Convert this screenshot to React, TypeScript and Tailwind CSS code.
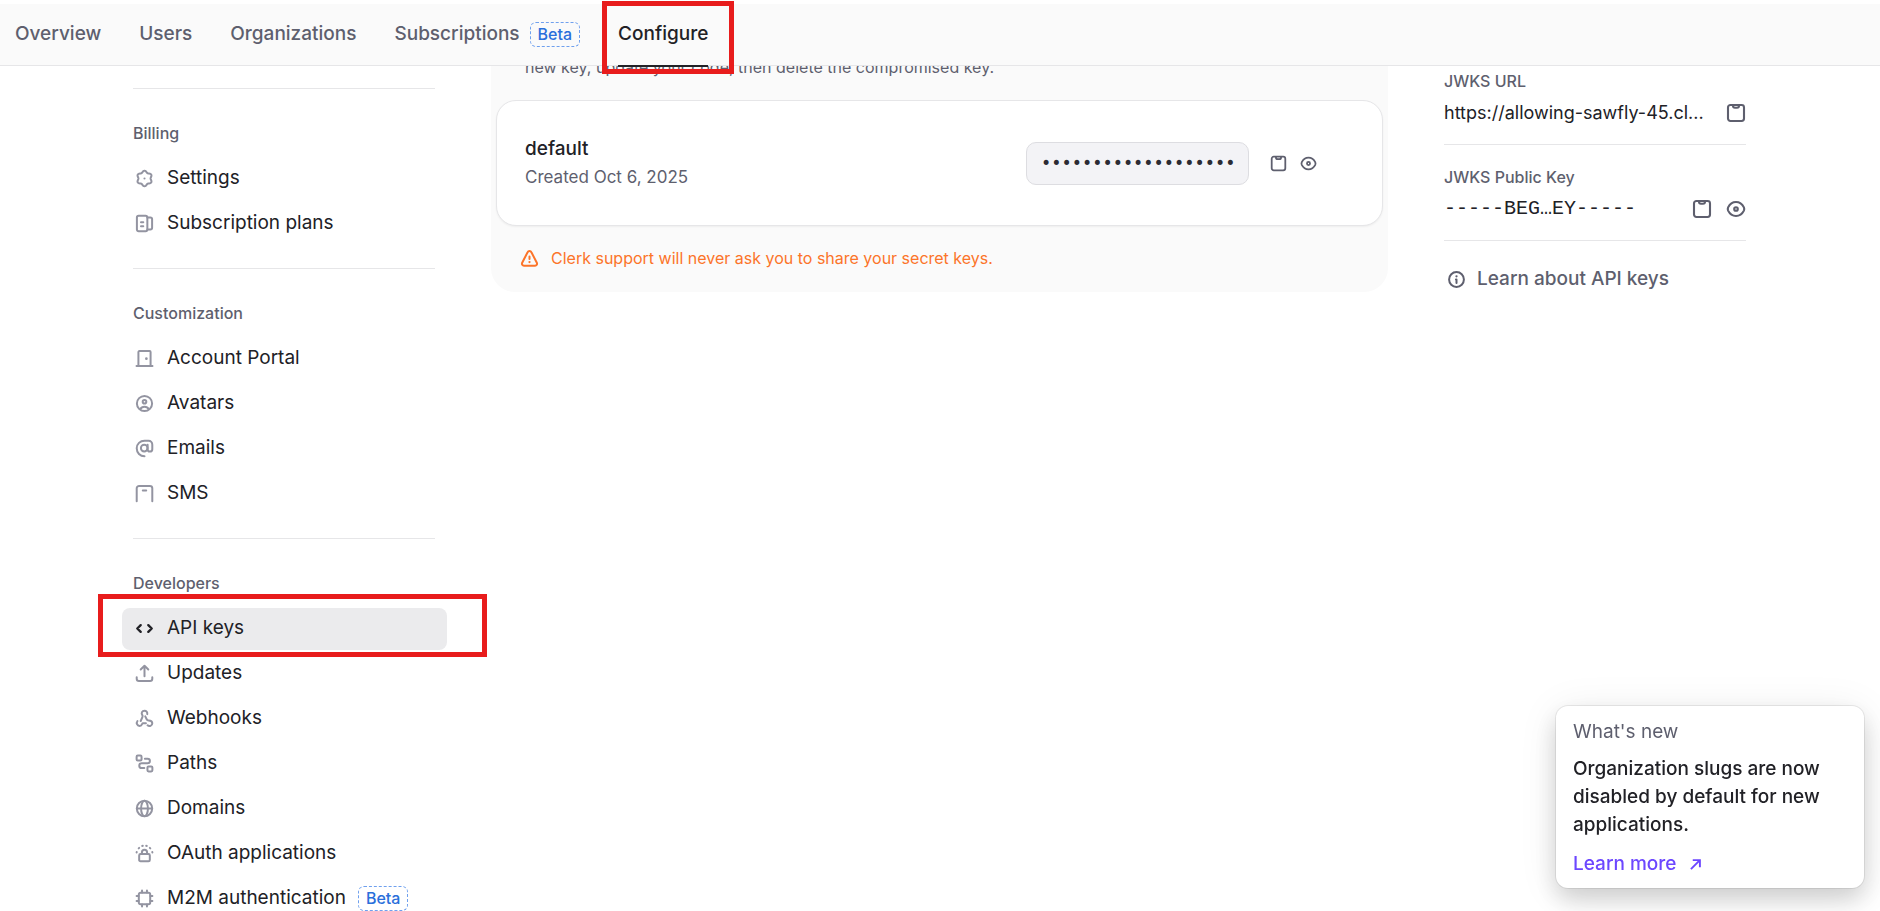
import type { ReactNode } from "react";

type IconProps = { className?: string; children: ReactNode };

function Icon({ className = "size-[19px]", children }: IconProps) {
  return (
    <svg
      viewBox="0 0 20 20"
      className={className}
      fill="none"
      stroke="currentColor"
      strokeWidth="2.1"
      strokeLinecap="round"
      strokeLinejoin="round"
      aria-hidden="true"
    >
      {children}
    </svg>
  );
}

// Six-lobed outline of the settings cog, with one lobe pointing straight up.
const cogPoints = Array.from({ length: 72 }, (_, i) => {
  const angle = (i / 72) * Math.PI * 2;
  const radius = 7.3 + 0.9 * Math.cos(6 * angle);
  return `${(10 + radius * Math.sin(angle)).toFixed(2)},${(10 - radius * Math.cos(angle)).toFixed(2)}`;
}).join(" ");

const icons = {
  settings: (
    <Icon>
      <polygon points={cogPoints} />
      <circle cx="10" cy="10" r="1.1" fill="currentColor" stroke="none" />
    </Icon>
  ),
  plans: (
    <Icon>
      <rect x="2" y="1.8" width="11" height="16.4" rx="1.8" />
      <path d="M13 3.6h3.200c1 0 1.800.8 1.800 1.800v9.200c0 1-.8 1.800-1.800 1.800H13M6.300 8.600h2.400M6.300 12.800h2.400" />
    </Icon>
  ),
  portal: (
    <Icon>
      <path d="M3.600 17.600V3.200c0-.6.4-1 1-1h10.800c.6 0 1 .4 1 1v14.400M1.600 18h16.800" />
      <circle cx="12" cy="10.200" r="1.400" fill="currentColor" stroke="none" />
    </Icon>
  ),
  avatars: (
    <Icon>
      <circle cx="10" cy="10" r="8" />
      <circle cx="10" cy="8.200" r="1.900" />
      <path d="M5.800 15.800c.8-1.800 2.400-2.400 4.200-2.400s3.400.6 4.200 2.400" />
    </Icon>
  ),
  emails: (
    <Icon>
      <circle cx="9.700" cy="9.600" r="3.500" />
      <path d="M13.300 6v5c0 1.300.9 2.200 2.300 2.200s2.600-.9 2.600-2.500V6c0-2.400-1.600-4.200-4-4.200H10C5.400 1.800 1.800 5.200 1.800 9.800c0 4.700 3.600 8.300 8.200 8.300" />
    </Icon>
  ),
  sms: (
    <Icon>
      <path d="M1.800 18.200V4.600c0-1.500 1.100-2.600 2.600-2.600h11.200c1.500 0 2.600 1.100 2.600 2.600v13.600M8.200 6.900h3.600" />
    </Icon>
  ),
  code: (
    <Icon>
      <path d="M6 6.500 2.400 10 6 13.500M14 6.500l3.600 3.500-3.600 3.500" strokeWidth="2.500" />
    </Icon>
  ),
  updates: (
    <Icon>
      <path d="M10 13V2M6 5.800l4-4 4 4M1.800 14v1.600c0 1.300 1 2.400 2.400 2.400h11.600c1.400 0 2.400-1.100 2.400-2.400V14" />
    </Icon>
  ),
  webhooks: (
    <Icon>
      <path d="M12.900 5.400c.3-2-1-3.600-2.900-3.600-2.600 0-3.700 2.600-2.400 4.400.6.900.6 1.500.2 2.400L6 12.600M10.800 7.800l1.500 3c.4.9 1 1.200 2 1.200 2.400 0 3.900 1.300 3.900 3.100 0 2.500-3.100 3.800-5 2.100M2.600 12.600c-1.600 2.200-.4 5.200 2.200 5.200 1.300 0 2.300-.8 2.700-2 .2-.5.5-.7 1-.7h3" />
    </Icon>
  ),
  paths: (
    <Icon>
      <rect x="1.700" y="1.700" width="5.200" height="5.200" rx="1.200" />
      <rect x="13.100" y="13.100" width="5.200" height="5.200" rx="1.200" />
      <path d="M10.400 5h2.800c1.500 0 2.500 1 2.500 2.400s-1 2.400-2.500 2.400H7c-1.500 0-2.500 1-2.500 2.500s1 2.500 2.500 2.500h2.800" />
    </Icon>
  ),
  domains: (
    <Icon>
      <circle cx="10" cy="10" r="8.100" />
      <ellipse cx="10" cy="10" rx="3.600" ry="8.100" />
      <path d="M2 10h16" />
    </Icon>
  ),
  oauth: (
    <Icon>
      <rect x="4.400" y="10.600" width="11.200" height="7.600" rx="1.400" />
      <path d="M7.300 10.400V8.800a2.700 2.700 0 0 1 5.400 0v1.600M1.700 8.900l.1-.4M3.900 4.600l.5-.5M7.600 2l.6-.1M11.800 1.900l.6.1M15.600 4.100l.5.500M18.200 8.500l.1.400" />
    </Icon>
  ),
  m2m: (
    <Icon>
      <rect x="4" y="4" width="12" height="12" rx="1.800" />
      <path d="M7.400 3.800V1.700M12.600 3.800V1.700M7.400 18.300v-2.100M12.600 18.300v-2.100M3.800 7.400H1.700M3.800 12.600H1.700M18.300 7.400h-2.100M18.300 12.600h-2.100" />
    </Icon>
  ),
};

function Clipboard({ className }: { className: string }) {
  return (
    <Icon className={className}>
      <rect x="2" y="2" width="16" height="16" rx="2.400" />
      <path d="M7 2.200v.6c0 1.200.9 2 2 2h2c1.100 0 2-.8 2-2v-.6" />
    </Icon>
  );
}

function Eye({ className }: { className: string }) {
  return (
    <Icon className={className}>
      <path d="M10 3c3.800 0 6.400 2.400 7.900 5.400.5 1.100.5 2.100 0 3.200C16.400 14.600 13.800 17 10 17s-6.400-2.400-7.900-5.400c-.5-1.100-.5-2.100 0-3.200C3.600 5.400 6.200 3 10 3Z" />
      <circle cx="10" cy="10" r="1.800" />
    </Icon>
  );
}

function Beta() {
  return (
    <span className="rounded-md border border-dashed border-[#6fa0ee] px-[7px] text-base leading-[23px] font-medium text-[#2a6fdb]">
      Beta
    </span>
  );
}

type NavItem = { label: string; icon: ReactNode; active?: boolean; beta?: boolean };

const sections: { title: string; items: NavItem[] }[] = [
  {
    title: "Billing",
    items: [
      { label: "Settings", icon: icons.settings },
      { label: "Subscription plans", icon: icons.plans },
    ],
  },
  {
    title: "Customization",
    items: [
      { label: "Account Portal", icon: icons.portal },
      { label: "Avatars", icon: icons.avatars },
      { label: "Emails", icon: icons.emails },
      { label: "SMS", icon: icons.sms },
    ],
  },
  {
    title: "Developers",
    items: [
      { label: "API keys", icon: icons.code, active: true },
      { label: "Updates", icon: icons.updates },
      { label: "Webhooks", icon: icons.webhooks },
      { label: "Paths", icon: icons.paths },
      { label: "Domains", icon: icons.domains },
      { label: "OAuth applications", icon: icons.oauth },
      { label: "M2M authentication", icon: icons.m2m, beta: true },
    ],
  },
];

function Header() {
  return (
    <header className="relative z-10 shrink-0 border-b border-[#e6e6e8] bg-[#fafafa]">
      <div className="h-1 bg-white" />
      <nav className="flex h-[61px] items-stretch gap-[38px] px-[15px] text-[19px] font-medium text-[#5e5f6e]">
        <a href="#overview" className="flex items-center">Overview</a>
        <a href="#users" className="flex items-center">Users</a>
        <a href="#organizations" className="flex items-center">Organizations</a>
        <a href="#subscriptions" className="flex items-center gap-[10px]">
          Subscriptions <Beta />
        </a>
        <a href="#configure" className="relative flex items-center text-[#212126]">
          Configure
          <span className="absolute inset-x-0 -bottom-[2px] h-[2px] bg-[#212126]" />
          <span className="absolute -top-[3px] -right-[26px] -bottom-[9px] -left-4 border-5 border-[#e81c1c]" />
        </a>
      </nav>
    </header>
  );
}

function Sidebar() {
  return (
    <aside className="w-[302px] shrink-0 pt-[22px]">
      {sections.map((section) => (
        <section key={section.title} className="border-t border-[#e6e6e8] pt-[33px] pb-[22px]">
          <h2 className="text-base leading-[22px] font-medium text-[#5e5f6e]">{section.title}</h2>
          <ul className="-mr-3 -ml-[11px] mt-3 flex flex-col">
            {section.items.map((item) => (
              <li key={item.label} className="relative flex h-[45px] flex-col justify-center">
                <a
                  href="#section"
                  className={
                    item.active
                      ? "flex h-[42px] items-center rounded-lg bg-[#ebebed] px-[13px] text-[19px] text-[#212126]"
                      : "flex h-[42px] items-center rounded-lg px-[13px] text-[19px] text-[#212126]"
                  }
                >
                  <span className={item.active ? "w-8 text-[#212126]" : "w-8 text-[#9394a1]"}>{item.icon}</span>
                  {item.label}
                  {item.beta && <span className="ml-3 flex"><Beta /></span>}
                </a>
                {item.active && (
                  <span className="pointer-events-none absolute -top-3 -right-10 -bottom-[6px] -left-6 border-5 border-[#e81c1c]" />
                )}
              </li>
            ))}
          </ul>
        </section>
      ))}
    </aside>
  );
}

function SecretKeys() {
  return (
    <section className="min-w-0 flex-1 self-start rounded-b-3xl bg-[#fafafa] px-[5px] pb-5 text-[#5e5f6e]">
      <p className="-mt-3 mb-5 px-[29px] text-base leading-[26px]">
        new key, update your code, then delete the compromised key.
      </p>
      <div className="flex h-[126px] items-center rounded-[20px] border border-[#e6e6e8] bg-white pr-[65px] pl-7 shadow-xs">
        <div className="flex-1">
          <h3 className="text-[19px] leading-[29px] font-medium text-[#212126]">default</h3>
          <p className="text-[17px] leading-[29px]">Created Oct 6, 2025</p>
        </div>
        <input
          readOnly
          aria-label="Secret key"
          value="•••••••••••••••••••"
          className="h-[43px] w-[223px] rounded-[10px] border border-[#dddde1] bg-[#f3f3f6] px-[14px] font-['DejaVu_Sans_Mono',monospace] text-[17px] text-[#2b2b33]"
        />
        <button aria-label="Copy secret key" className="ml-[21px]"><Clipboard className="size-[17px]" /></button>
        <button aria-label="Show secret key" className="ml-[13px]"><Eye className="size-[17px]" /></button>
      </div>
      <p className="mt-[18px] flex items-center gap-3 px-6 text-base leading-[28px] text-[#fc7429]">
        <Icon className="size-[19px]">
          <path d="M8 3.400c.8-1.700 3.200-1.700 4 0l5.700 11c.7 1.500-.2 3.200-1.900 3.200H4.200c-1.700 0-2.600-1.700-1.900-3.200ZM10 7.800v2.800" />
          <circle cx="10" cy="13.700" r="1.200" fill="currentColor" stroke="none" />
        </Icon>
        Clerk support will never ask you to share your secret keys.
      </p>
    </section>
  );
}

function Details() {
  return (
    <aside className="w-[302px] shrink-0 pt-[2px] text-[#5e5f6e]">
      <div className="border-b border-[#e6e6e8] pb-4">
        <h2 className="text-base leading-[26px] font-medium">JWKS URL</h2>
        <div className="mt-1 flex h-[30px] items-center justify-between">
          <span className="text-lg whitespace-nowrap text-[#212126]">https://allowing-sawfly-45.cl...</span>
          <button aria-label="Copy JWKS URL"><Clipboard className="size-5" /></button>
        </div>
      </div>
      <div className="border-b border-[#e6e6e8] pt-[19px] pb-4">
        <h2 className="text-base leading-[26px] font-medium">JWKS Public Key</h2>
        <div className="mt-1 flex h-[30px] items-center gap-[14px]">
          <span className="flex-1 font-['Liberation_Mono',monospace] text-[20px] text-[#212126]">-----BEG…EY-----</span>
          <button aria-label="Copy public key"><Clipboard className="size-5" /></button>
          <button aria-label="Show public key"><Eye className="size-5" /></button>
        </div>
      </div>
      <a href="#learn" className="mt-6 flex items-center gap-[11px] pl-[3px] text-[19px] leading-[28px] font-medium">
        <Icon className="size-[19px]">
          <circle cx="10" cy="10" r="7.800" />
          <path d="M10 10v3.600M9.400 10h.6" />
          <circle cx="10" cy="6.600" r="1.200" fill="currentColor" stroke="none" />
        </Icon>
        Learn about API keys
      </a>
    </aside>
  );
}

function WhatsNew() {
  return (
    <div className="fixed right-4 bottom-[23px] z-20 w-[308px] rounded-xl bg-white px-[17px] pt-3 pb-[10px] text-[19px] leading-[28px] shadow-[0_0_0_1px_rgba(0,0,0,0.08),0_12px_24px_rgba(0,0,0,0.16),0_4px_40px_rgba(0,0,0,0.08)]">
      <p className="text-[#5e5f6e]">What's new</p>
      <p className="mt-[9px] font-medium text-[#212126]">
        Organization slugs are now disabled by default for new applications.
      </p>
      <a href="#whats-new" className="mt-[11px] flex items-center gap-[14px] font-medium text-[#6c47ff]">
        Learn more
        <svg viewBox="0 0 12 12" className="size-[11px]" fill="none" stroke="currentColor" strokeWidth="2.100" aria-hidden="true">
          <path d="M1 11 10.500 1.500M3 1.200h7.800V9" />
        </svg>
      </a>
    </div>
  );
}

export default function App() {
  return (
    <div className="flex h-screen flex-col overflow-hidden bg-white font-[Inter,sans-serif]">
      <Header />
      <main className="flex min-h-0 flex-1 gap-14 pr-[134px] pl-[133px]">
        <Sidebar />
        <SecretKeys />
        <Details />
      </main>
      <WhatsNew />
    </div>
  );
}
